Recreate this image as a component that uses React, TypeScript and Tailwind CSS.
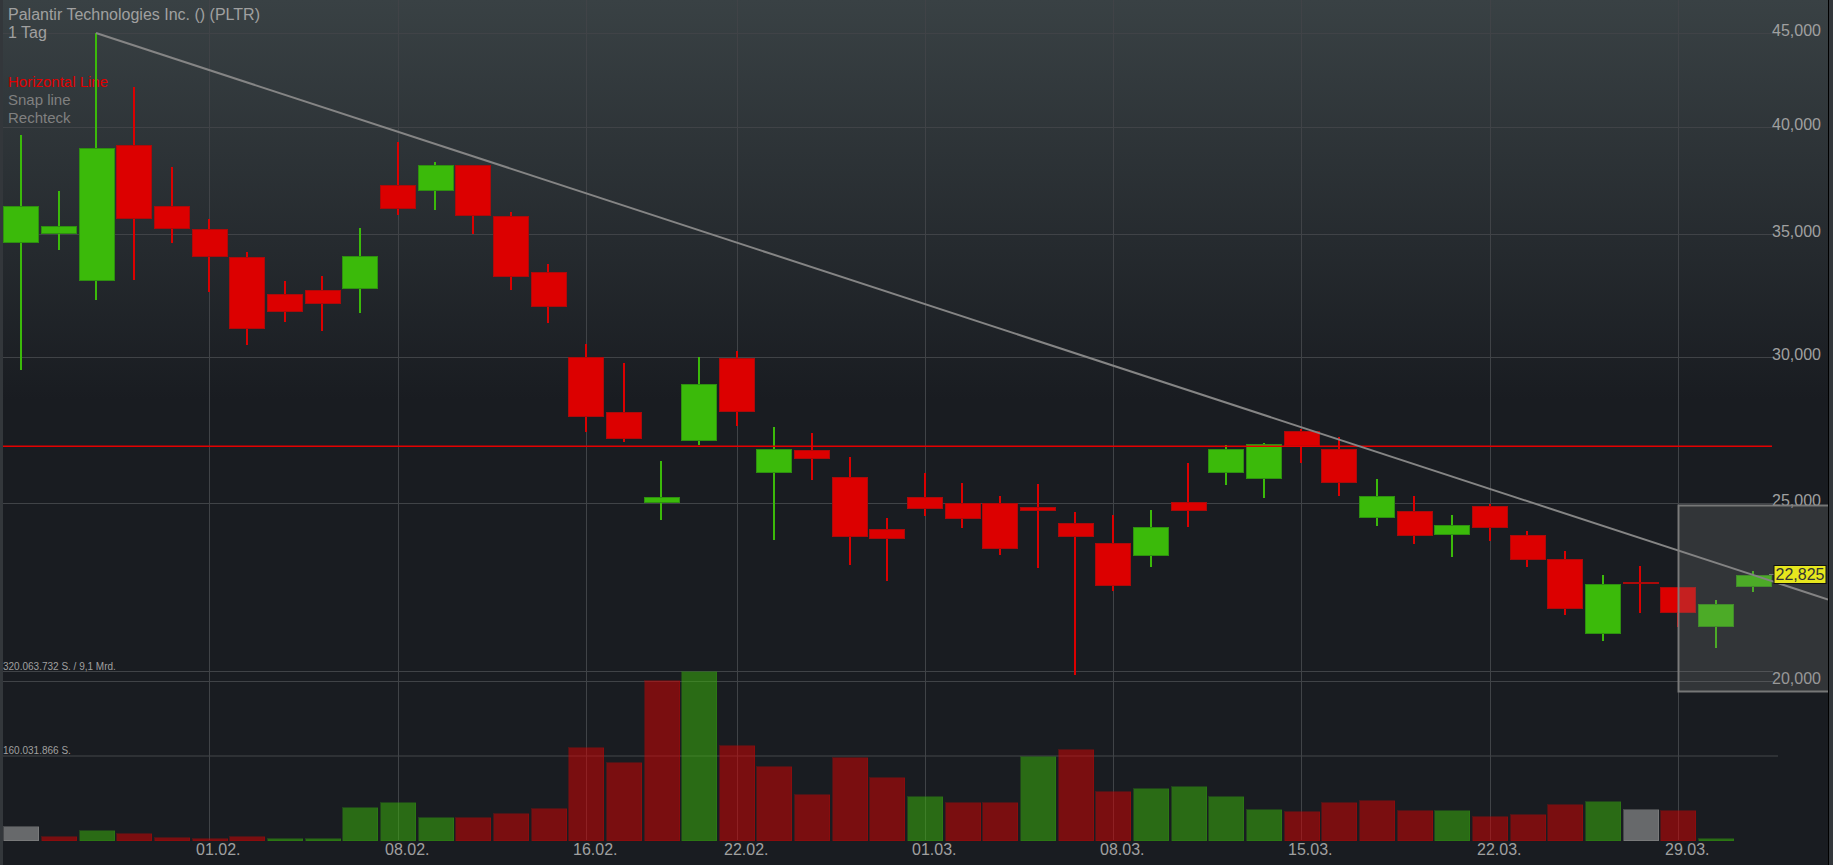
const C: [number, number, number, number, "r" | "g", number, "r" | "g" | "n"][] = [
  [135, 206, 243, 370, "g", 826, "n"],
  [191, 226, 234, 250, "g", 836, "r"],
  [33, 148, 281, 300, "g", 830, "g"],
  [87, 145, 219, 280, "r", 833, "r"],
  [167, 206, 229, 243, "r", 837, "r"],
  [219, 229, 257, 292, "r", 838, "r"],
  [252, 257, 329, 345, "r", 836, "r"],
  [281, 294, 312, 322, "r", 838, "g"],
  [276, 290, 304, 331, "r", 838, "g"],
  [228, 256, 289, 313, "g", 807, "g"],
  [142, 185, 209, 215, "r", 802, "g"],
  [162, 165, 191, 210, "g", 817, "g"],
  [165, 165, 216, 234, "r", 817, "r"],
  [212, 216, 277, 290, "r", 813, "r"],
  [264, 272, 307, 323, "r", 808, "r"],
  [344, 357, 417, 432, "r", 747, "r"],
  [363, 412, 439, 442, "r", 762, "r"],
  [461, 497, 503, 520, "g", 680, "r"],
  [357, 384, 441, 445, "g", 671, "g"],
  [351, 358, 412, 426, "r", 745, "r"],
  [427, 449, 473, 540, "g", 766, "r"],
  [433, 450, 459, 480, "r", 794, "r"],
  [457, 477, 537, 565, "r", 757, "r"],
  [518, 529, 539, 581, "r", 777, "r"],
  [473, 497, 509, 516, "r", 796, "g"],
  [483, 503, 519, 528, "r", 802, "r"],
  [496, 503, 549, 555, "r", 802, "r"],
  [484, 507, 511, 568, "r", 756, "g"],
  [512, 523, 537, 675, "r", 749, "r"],
  [515, 543, 586, 591, "r", 791, "r"],
  [510, 527, 556, 567, "g", 788, "g"],
  [463, 502, 511, 527, "r", 786, "g"],
  [445, 449, 473, 485, "g", 796, "g"],
  [443, 444, 479, 498, "g", 809, "g"],
  [429, 431, 446, 463, "r", 811, "r"],
  [437, 449, 483, 496, "r", 802, "r"],
  [479, 496, 518, 526, "g", 800, "r"],
  [496, 511, 536, 544, "r", 810, "r"],
  [515, 525, 535, 557, "g", 810, "g"],
  [504, 506, 528, 541, "r", 816, "r"],
  [531, 535, 560, 567, "r", 814, "r"],
  [551, 559, 609, 615, "r", 804, "r"],
  [575, 584, 634, 641, "g", 801, "g"],
  [566, 582, 584, 613, "r", 809, "n"],
  [587, 587, 613, 627, "r", 810, "r"],
  [600, 604, 627, 648, "g", 838, "g"],
  [571, 575, 587, 592, "g", 840, "g"],
];

const FILL = { r: "#dc0000", g: "#3bba0a", n: "#b5b5b5" };
const EDGE = { r: "#ab0a0a", g: "#2e8f10", n: "#9a9a9a" };

const H = [33, 127, 234, 357, 503, 671, 681];
const V = [209, 398, 586, 737, 925, 1113, 1301, 1490, 1678];
const DATES = ["01.02.", "08.02.", "16.02.", "22.02.", "01.03.", "08.03.", "15.03.", "22.03.", "29.03."];
const PRICES: [string, number][] = [
  ["45,000", 36],
  ["40,000", 130],
  ["35,000", 237],
  ["30,000", 360],
  ["25,000", 506],
  ["20,000", 684],
];

const cx = (i: number) => 21 + 37.66 * i;

export default function App() {
  return (
    <div className="flex h-[865px] w-[1833px] overflow-hidden bg-[#33373b] font-['Liberation_Sans',Arial,sans-serif]">
      <div className="w-[3px] shrink-0" />
      <div className="h-full w-[1825px] shrink-0 bg-[linear-gradient(180deg,#394144_0,#191c21_400px)]">
        <svg viewBox="3 0 1825 865" width={1825} height={865} className="block">
          {/* grid */}
          <g shapeRendering="crispEdges" fill="#404347">
            {H.map((y) => (
              <rect key={y} x={3} y={y} width={1770} height={1} />
            ))}
            <rect x={3} y={755} width={1775} height={2} fill="#2e3135" />
            {V.map((x) => (
              <rect key={x} x={x} y={0} width={1} height={840} />
            ))}
          </g>

          {/* texts */}
          <g className="text-[16px]" fill="#a0a0a0">
            <text x={8} y={20}>Palantir Technologies Inc. () (PLTR)</text>
            <text x={8} y={38}>1 Tag</text>
            <text x={8} y={87} fill="#e00000" className="text-[15px]">Horizontal Line</text>
            <text x={8} y={105} fill="#808080" className="text-[15px]">Snap line</text>
            <text x={8} y={123} fill="#808080" className="text-[15px]">Rechteck</text>
            {PRICES.map(([p, y]) => (
              <text key={p} x={1821} y={y} textAnchor="end">{p}</text>
            ))}
            {DATES.map((d, i) => (
              <text key={d} x={V[i] - 13} y={855}>{d}</text>
            ))}
            <text x={3} y={670} className="text-[10px]">320.063.732 S. / 9,1 Mrd.</text>
            <text x={3} y={754} className="text-[10px]">160.031.866 S.</text>
          </g>

          {/* volume */}
          <g shapeRendering="crispEdges">
            {C.map((c, i) => {
              const x = Math.round(cx(i) - 17.7);
              return (
                <rect
                  key={i}
                  x={x + 0.5}
                  y={c[5] + 0.5}
                  width={35}
                  height={840 - c[5]}
                  fill={FILL[c[6]]}
                  fillOpacity={0.5}
                  stroke={EDGE[c[6]]}
                  strokeOpacity={0.35}
                />
              );
            })}
          </g>

          {/* candles */}
          <g shapeRendering="crispEdges">
            {C.map((c, i) => {
              const x = Math.round(cx(i) - 17.7);
              const w = Math.round(cx(i) - 1);
              return (
                <g key={i}>
                  <rect x={w} y={c[0]} width={2} height={c[3] - c[0]} fill={FILL[c[4]]} />
                  <rect
                    x={x + 0.5}
                    y={c[1] + 0.5}
                    width={35}
                    height={c[2] - c[1] - 1}
                    fill={FILL[c[4]]}
                    stroke={EDGE[c[4]]}
                  />
                </g>
              );
            })}
          </g>

          {/* drawn lines */}
          <rect x={3} y={445.5} width={1769} height={1.5} fill="#e40000" />
          <line x1={96} y1={33} x2={1828} y2={599.5} stroke="#858585" strokeWidth={2} />

          {/* selection box */}
          <rect x={1678.5} y={505.5} width={152} height={186} fill="#808080" fillOpacity={0.25} stroke="#808080" strokeOpacity={0.9} strokeWidth={2} />

          {/* last price */}
          <rect x={1769} y={574} width={5} height={1} fill="#808080" />
          <rect x={1774} y={565.5} width={52} height={18} fill="#e6e61e" stroke="#111111" />
          <text x={1800} y={580} textAnchor="middle" fill="#333333" className="text-[16px]">22,825</text>
        </svg>
      </div>
      <div className="h-full w-px shrink-0 bg-black" />
      <div className="w-1 shrink-0" />
    </div>
  );
}
